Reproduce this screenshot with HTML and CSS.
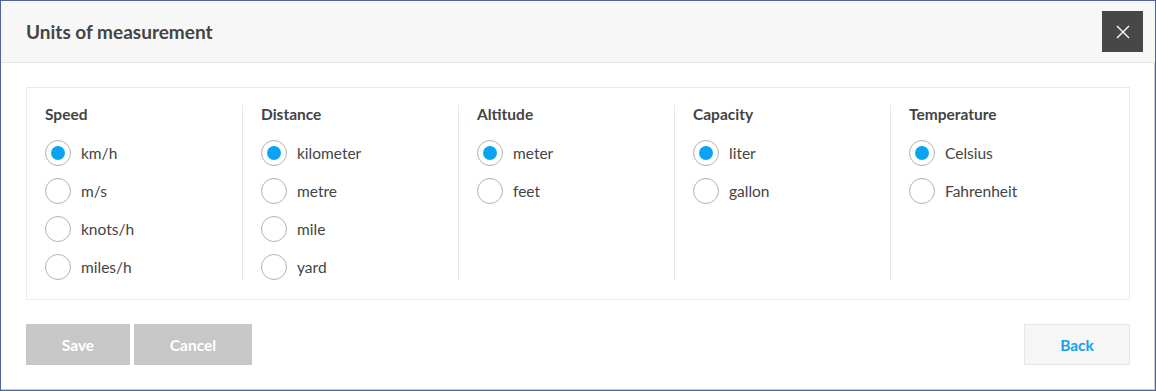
FILE: index.html
```html
<!DOCTYPE html>
<html lang="en">
<head>
    <meta charset="UTF-8">
    <meta name="viewport" content="width=device-width, initial-scale=1.0">
    <title>Units of measurement</title>
    <link rel="stylesheet" href="styles.css">
</head>
<body>
    <div class="dialog">
        <div class="dialog-header">
            <h1 class="dialog-title">Units of measurement</h1>
            <button class="close-button" aria-label="Close">
                <svg width="14" height="14" viewBox="0 0 14 14">
                    <path d="M1 1 L13 13 M13 1 L1 13" stroke="#ffffff" stroke-width="1.4" fill="none"/>
                </svg>
            </button>
        </div>

        <div class="dialog-body">
            <div class="units-box">
                <div class="unit-column">
                    <h2 class="unit-heading">Speed</h2>
                    <label class="radio-row"><input type="radio" name="speed" checked><span class="radio-mark"></span>km/h</label>
                    <label class="radio-row"><input type="radio" name="speed"><span class="radio-mark"></span>m/s</label>
                    <label class="radio-row"><input type="radio" name="speed"><span class="radio-mark"></span>knots/h</label>
                    <label class="radio-row"><input type="radio" name="speed"><span class="radio-mark"></span>miles/h</label>
                </div>
                <div class="unit-column">
                    <h2 class="unit-heading">Distance</h2>
                    <label class="radio-row"><input type="radio" name="distance" checked><span class="radio-mark"></span>kilometer</label>
                    <label class="radio-row"><input type="radio" name="distance"><span class="radio-mark"></span>metre</label>
                    <label class="radio-row"><input type="radio" name="distance"><span class="radio-mark"></span>mile</label>
                    <label class="radio-row"><input type="radio" name="distance"><span class="radio-mark"></span>yard</label>
                </div>
                <div class="unit-column">
                    <h2 class="unit-heading">Altitude</h2>
                    <label class="radio-row"><input type="radio" name="altitude" checked><span class="radio-mark"></span>meter</label>
                    <label class="radio-row"><input type="radio" name="altitude"><span class="radio-mark"></span>feet</label>
                </div>
                <div class="unit-column">
                    <h2 class="unit-heading">Capacity</h2>
                    <label class="radio-row"><input type="radio" name="capacity" checked><span class="radio-mark"></span>liter</label>
                    <label class="radio-row"><input type="radio" name="capacity"><span class="radio-mark"></span>gallon</label>
                </div>
                <div class="unit-column">
                    <h2 class="unit-heading">Temperature</h2>
                    <label class="radio-row"><input type="radio" name="temperature" checked><span class="radio-mark"></span>Celsius</label>
                    <label class="radio-row"><input type="radio" name="temperature"><span class="radio-mark"></span>Fahrenheit</label>
                </div>
            </div>

            <div class="dialog-footer">
                <div class="footer-left">
                    <button class="btn btn-disabled btn-save">Save</button>
                    <button class="btn btn-disabled btn-cancel">Cancel</button>
                </div>
                <button class="btn btn-back">Back</button>
            </div>
        </div>
    </div>
</body>
</html>
```

FILE: styles.css
```css
html, body {
    margin: 0;
    padding: 0;
    height: 100%;
}
body {
    font-family: Lato, "Open Sans", Arial, sans-serif;
    color: #444444;
    background-color: #ffffff;
}
.dialog {
    box-sizing: border-box;
    height: 100vh;
    border: 1px solid #4d6498;
    box-shadow: inset -1px -1px 0 #cfcfcf;
    display: flex;
    flex-direction: column;
}
/* Header bar */
.dialog-header {
    height: 61px;
    background-color: #f7f7f7;
    border-bottom: 1px solid #e6e6e6;
    display: flex;
    align-items: center;
    justify-content: space-between;
    padding: 0 12px 0 25px;
}
.dialog-title {
    margin: 0;
    font-size: 19px;
    font-weight: bold;
    color: #444444;
}
.close-button {
    width: 41px;
    height: 41px;
    border: none;
    padding: 0;
    background-color: #474747;
    display: flex;
    align-items: center;
    justify-content: center;
    cursor: pointer;
}
/* Body with the unit columns */
.dialog-body {
    padding: 24px 25px 0 25px;
}
.units-box {
    border: 1px solid #ebebeb;
    padding: 17px 0 19px 0;
    display: grid;
    grid-template-columns: repeat(5, 216px);
}
.unit-column {
    box-sizing: border-box;
    padding-left: 18px;
    border-right: 1px solid #e6e6e6;
    display: flex;
    flex-direction: column;
    gap: 12px;
}
.unit-column:last-child {
    border-right: none;
}
.unit-heading {
    margin: 0 0 5px 0;
    font-size: 15.5px;
    font-weight: bold;
    line-height: 18px;
    color: #444444;
}
.radio-row {
    display: flex;
    align-items: center;
    gap: 10px;
    height: 26px;
    font-size: 15.5px;
    color: #444444;
    cursor: pointer;
}
.radio-row input {
    display: none;
}
.radio-mark {
    box-sizing: border-box;
    width: 26px;
    height: 26px;
    border: 1px solid #b3b3b3;
    border-radius: 50%;
    background-color: #ffffff;
    display: flex;
    align-items: center;
    justify-content: center;
}
.radio-row input:checked + .radio-mark::after {
    content: "";
    width: 14px;
    height: 14px;
    border-radius: 50%;
    background-color: #0aa5f2;
}
/* Footer buttons */
.dialog-footer {
    margin-top: 24px;
    display: flex;
    justify-content: space-between;
}
.footer-left {
    display: flex;
    gap: 4px;
}
.btn {
    height: 41px;
    font-family: Lato, "Open Sans", Arial, sans-serif;
    font-size: 15.5px;
    font-weight: bold;
    border: none;
    cursor: pointer;
}
.btn-disabled {
    background-color: #c7c7c7;
    color: #ffffff;
}
.btn-save {
    width: 104px;
}
.btn-cancel {
    width: 118px;
}
.btn-back {
    width: 106px;
    background-color: #f6f6f6;
    border: 1px solid #e6e6e6;
    color: #1a9fe8;
}
```
